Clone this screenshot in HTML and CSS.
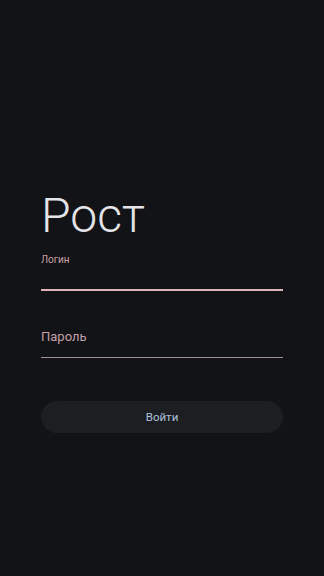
FILE: index.html
```html
<!DOCTYPE html>
<html>
	<head>
		<meta charset="utf-8" />
		<title>Рост</title>
		<link rel="stylesheet" href="styles.css">
	</head>
	<body>
		<div class="page">
			<h1 class="title">Рост</h1>
			<div class="field field-active">
				<label class="field-label">Логин</label>
				<input class="field-input field-input-login" type="text" />
			</div>
			<div class="field">
				<input class="field-input field-input-password" type="password" placeholder="Пароль" />
			</div>
			<a class="submit" href="#">Войти</a>
		</div>
	</body>
</html>
```

FILE: styles.css
```css
html,body{margin: 0px;padding: 0px;height: 100%;}
body{background: #121317;font-family: Roboto, "Noto Sans", sans-serif;}
.page{
	padding: 188px 41px 0px;
	display: flex;flex-direction: column;
}
.title{
	margin: 0px;
	font-size: 48px;font-weight: 300;line-height: 56px;
	color: #e4e3e8;
}
.field{display: flex;flex-direction: column;}
.field-active{margin-top: 10px;}
.field-label{
	font-size: 10px;line-height: 12px;color: #c8a0a6;
}
.field-input{
	box-sizing: content-box;
	margin: 0px;padding: 0px;
	height: 16px;width: 100%;
	background: transparent;border: none;outline: none;
	font-family: Roboto, "Noto Sans", sans-serif;font-size: 13px;color: #e4e3e8;
}
.field-input-login{
	padding-top: 7px;
	border-bottom: 2px solid #e0b3b6;
}
.field-input-password{
	margin-top: 29px;
	padding: 8px 0px 13px;
	border-bottom: 1px solid #a68e95;
}
.field-input-password::placeholder{color: #c3a2aa;opacity: 1;}
.submit{
	display: block;margin-top: 43px;
	height: 32px;line-height: 32px;border-radius: 16px;
	background: #1c1e22;
	text-align: center;text-decoration: none;
	font-size: 11.5px;color: #b0c2dc;
}
```
